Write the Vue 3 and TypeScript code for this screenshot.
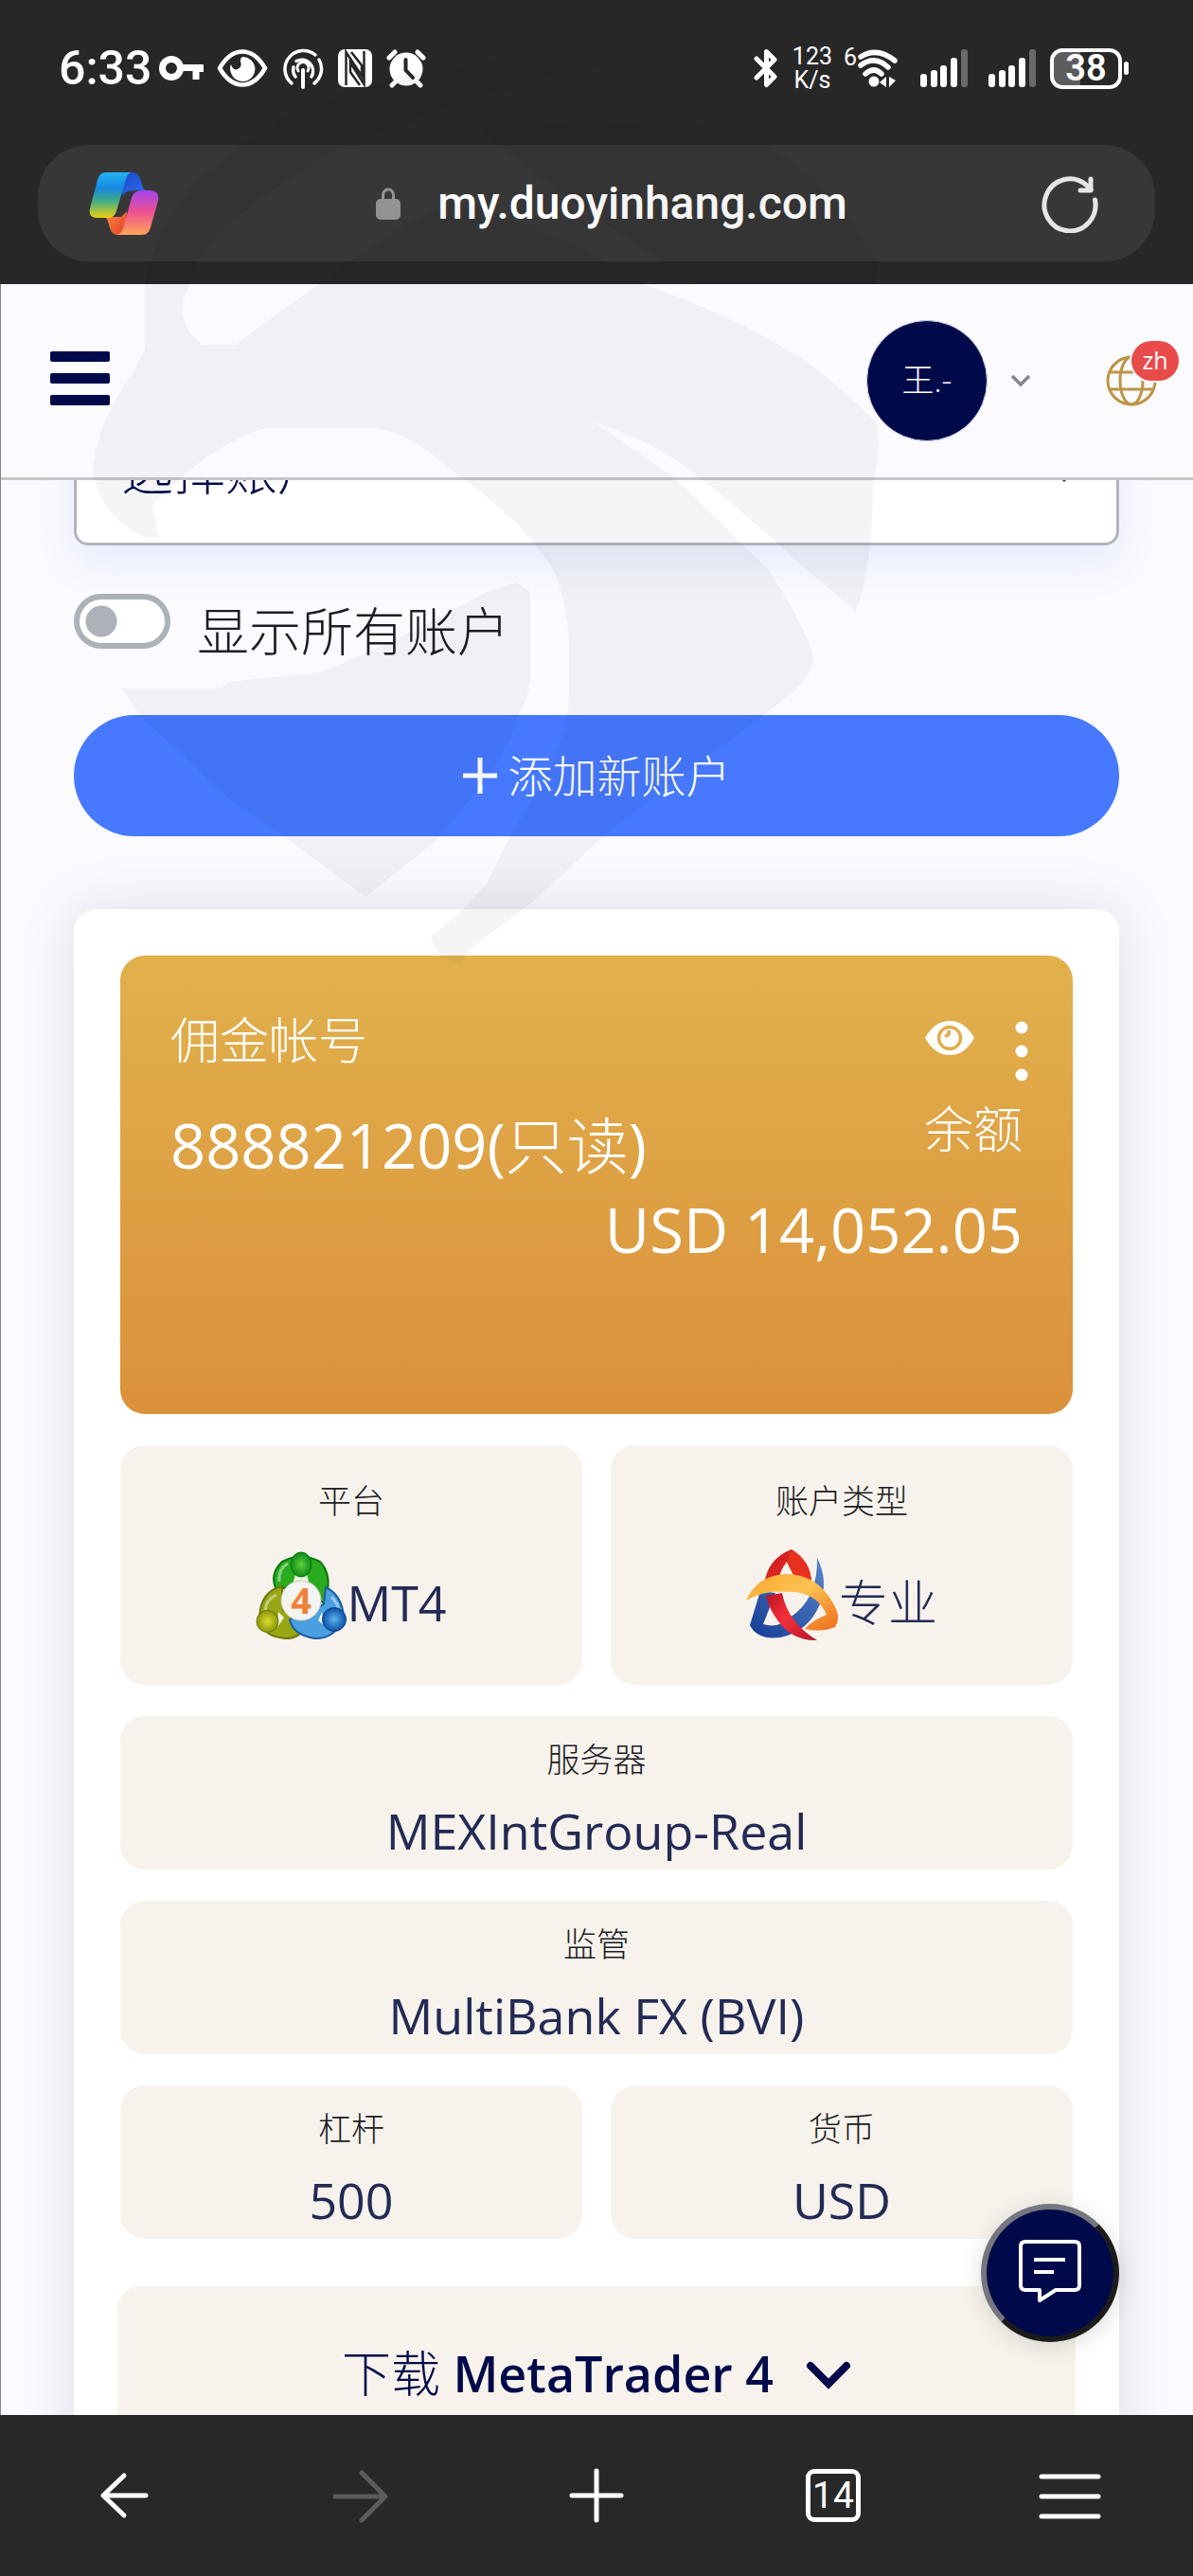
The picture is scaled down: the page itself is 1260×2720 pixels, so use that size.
<script setup lang="ts">
import { ref } from 'vue'

interface Fact {
  label: string
  value: string
  wide?: boolean
}

const facts: Fact[] = [
  { label: '服务器', value: 'MEXIntGroup-Real', wide: true },
  { label: '监管', value: 'MultiBank FX (BVI)', wide: true },
  { label: '杠杆', value: '500' },
  { label: '货币', value: 'USD' },
]

const signals = [0, 1]
const showAll = ref(false)
const account = ref('')
</script>

<template>
  <div class="screen">
    <header class="browser-top">
      <div class="status">
        <div class="status-left">
          <span class="clock">6:33</span>
          <svg class="i-key" width="48" height="28" viewBox="0 0 48 28" fill="none" stroke="#fff">
            <circle cx="13" cy="14" r="9.5" stroke-width="7" />
            <path d="M23 13.5H46M39 15V26" stroke-width="7" />
            <path d="M44.500 10V18" stroke-width="5" />
          </svg>
          <svg class="i-eye" width="54" height="44" viewBox="0 0 54 44">
            <path d="M3 22C10 10 18 4.500 27 4.500S44 10 51 22C44 34 36 39.500 27 39.500S10 34 3 22Z" fill="none" stroke="#fff" stroke-width="4.500" stroke-linejoin="round" />
            <path d="M27 10a13 13 0 1 1-12 17q-2-5 0-9q2 7 7 5q5-2 3-8q-1-3 2-5Z" fill="#fff" />
          </svg>
          <svg class="i-cast" width="44" height="44" viewBox="0 0 44 44" fill="none" stroke="#fff" stroke-width="3.500" stroke-linecap="round">
            <path d="M10 38A19.500 19.500 0 0 1 35 8M39 13A19.500 19.500 0 0 1 34 38" />
            <path d="M14 31A12 12 0 0 1 12 21M15 14.500A12 12 0 0 1 31 31" />
            <path d="M17 25A6 6 0 1 1 27 25" stroke-width="3" />
            <path d="M22 24V42" stroke-width="4" />
          </svg>
          <svg class="i-nfc" width="36" height="40" viewBox="0 0 36 40">
            <rect width="36" height="40" rx="7" fill="#fff" />
            <path d="M8.500 38V3L25 28V17L14 3M27.500 2V37L13 14V24L23 38" fill="none" stroke="#272727" stroke-width="2.500" />
          </svg>
          <svg class="i-alarm" width="42" height="42" viewBox="0 0 42 42" stroke="#fff" stroke-linecap="round">
            <path d="M3 10L9 4M39 10L33 4M11 34L6 39M31 34L36 39" stroke-width="5" />
            <circle cx="21" cy="22" r="17.500" fill="#fff" stroke="none" />
            <path d="M20.500 12V23L28 31" fill="none" stroke="#272727" stroke-width="4" />
          </svg>
        </div>
        <div class="status-right">
          <svg width="26" height="42" viewBox="0 0 26 42" fill="none" stroke="#fff" stroke-width="5" stroke-linejoin="round" stroke-linecap="round">
            <path d="M3 11L22 30L13.500 38.500V3.500L22 12L3 31" />
          </svg>
          <span class="rate"><span>123</span><span>K/s</span></span>
          <span class="wifi">
            <span class="wifi-gen">6</span>
            <svg width="46" height="42" viewBox="0 0 46 42" fill="none" stroke="#fff" stroke-width="5.500" stroke-linecap="round">
              <path d="M5 9Q22 -2 41 13M5 18Q20 7 34 20M10 27Q19 19 27 27" />
              <circle cx="19" cy="35" r="5.500" fill="#fff" stroke="none" />
              <path d="M32 30V41L25 36ZM35 41V30L42 34Z" fill="#fff" stroke="none" />
            </svg>
          </span>
          <svg v-for="s in signals" :key="s" class="signal" width="50" height="40" viewBox="0 0 50 40" fill="#fff">
            <rect x="0" y="26" width="7" height="14" rx="3" />
            <rect x="11" y="22" width="7" height="18" rx="3" />
            <rect x="21" y="17" width="7" height="23" rx="3" />
            <rect x="32" y="9" width="7" height="31" rx="3" />
            <rect x="43" y="0" width="7" height="40" rx="3" fill="#6a6a6a" />
          </svg>
          <span class="battery"><span class="battery-body">38</span><span class="battery-tip"></span></span>
        </div>
      </div>

      <div class="address">
        <svg class="copilot" width="74" height="68" viewBox="0 0 74 68">
          <defs>
            <linearGradient id="cpA" x1="0" y1="0" x2="0" y2="1">
              <stop offset="0" stop-color="#22b4f0" /><stop offset=".35" stop-color="#1787e2" />
              <stop offset=".65" stop-color="#46b07e" /><stop offset="1" stop-color="#efcf12" />
            </linearGradient>
            <linearGradient id="cpB" x1="0" y1="0" x2="0" y2="1">
              <stop offset="0" stop-color="#a345ee" /><stop offset=".5" stop-color="#ef528f" />
              <stop offset="1" stop-color="#ffa657" />
            </linearGradient>
            <linearGradient id="cpC" x1="0" y1="0" x2="1" y2="1">
              <stop offset="0" stop-color="#1b45c4" /><stop offset="1" stop-color="#2a6df0" />
            </linearGradient>
            <linearGradient id="cpD" x1="0" y1="0" x2="1" y2="1">
              <stop offset="0" stop-color="#ff8a3c" /><stop offset="1" stop-color="#e0402f" />
            </linearGradient>
          </defs>
          <path d="M28 1H46Q52 1 54 8L57 17Q58 20 61 20H50Q38 19 36 26Z" fill="url(#cpC)" />
          <path d="M16 48H34L40 42L38 62Q36 67 30 67Q24 67 22 60L20 53Q19 49 16 48Z" fill="url(#cpD)" />
          <path d="M18 1H46Q41 1 39 8L29 42Q27 49 20 49H8Q-1 49 1 39L9 9Q11 1 18 1Z" fill="url(#cpA)" />
          <path d="M56 20H64Q75 20 73 31L65 59Q63 67 56 67H28Q34 67 36 60L45 28Q47 20 56 20Z" fill="url(#cpB)" />
        </svg>
        <div class="url">
          <svg width="26" height="34" viewBox="0 0 26 34">
            <rect y="12" width="26" height="22" rx="5" fill="#939393" />
            <path d="M7.500 14V8A5.500 6 0 0 1 18.500 8V14" fill="none" stroke="#939393" stroke-width="3" />
          </svg>
          <span>my.duoyinhang.com</span>
        </div>
        <button class="plain" aria-label="刷新">
          <svg width="60" height="62" viewBox="0 0 60 62" fill="none" stroke="#e6e6e6" stroke-width="5" stroke-linecap="round" stroke-linejoin="round">
            <path d="M56.500 27A27 27.500 0 1 1 47 11L52 16" />
            <path d="M52 5V17H41" />
          </svg>
        </button>
      </div>
    </header>

    <main class="page">
      <nav class="site-nav">
        <button class="plain burger" aria-label="菜单"><i></i><i></i><i></i></button>
        <div class="nav-right">
          <span class="avatar">王.-</span>
          <button class="plain nav-chevron" aria-label="用户菜单">
            <svg width="22" height="14" viewBox="0 0 22 14" fill="none" stroke="#85858d" stroke-width="3.500"><path d="M2 2L11 11L20 2" /></svg>
          </button>
          <button class="plain language" aria-label="语言">
            <svg width="54" height="54" viewBox="0 0 54 54" fill="none" stroke="#bd9445" stroke-width="3">
              <circle cx="27" cy="27" r="25" />
              <ellipse cx="27" cy="27" rx="12" ry="25" />
              <path d="M4 18H50M4 36H50" />
            </svg>
            <span class="badge">zh</span>
          </button>
        </div>
      </nav>

      <div class="scroll">
        <div class="select-wrap">
          <select v-model="account" aria-label="选择账户">
            <option value="">选择账户</option>
          </select>
          <svg class="select-arrow" width="24" height="14" viewBox="0 0 24 14" fill="none" stroke="#44475c" stroke-width="3"><path d="M2 2L12 12L22 2" /></svg>
        </div>

        <label class="toggle-row">
          <input v-model="showAll" type="checkbox" class="toggle" />
          <span>显示所有账户</span>
        </label>

        <button class="add">
          <svg width="36" height="38" viewBox="0 0 36 38" stroke="#fff" stroke-width="5"><path d="M0 19H36M18 0V38" /></svg>
          <span>添加新账户</span>
        </button>

        <section class="card">
          <div class="gold">
            <div class="gold-top">
              <div>
                <div class="gold-label">佣金帐号</div>
                <div class="gold-number">888821209(<span class="thin">只读</span>)</div>
              </div>
              <div class="gold-side">
                <div class="gold-icons">
                  <button class="plain" aria-label="显示余额">
                    <svg width="54" height="36" viewBox="0 0 54 36">
                      <path d="M1 18C8 6 16 0 27 0S46 6 53 18C46 30 38 36 27 36S8 30 1 18Z" fill="#fff" />
                      <circle cx="27" cy="18" r="11.500" fill="none" stroke="#dfae4b" stroke-width="3.500" />
                      <path d="M22 15Q27 17 26 10" fill="none" stroke="#dfae4b" stroke-width="4" />
                    </svg>
                  </button>
                  <button class="plain" aria-label="更多">
                    <svg width="14" height="64" viewBox="0 0 14 64" fill="#fff">
                      <circle cx="7" cy="7" r="6.500" /><circle cx="7" cy="32" r="6.500" /><circle cx="7" cy="57" r="6.500" />
                    </svg>
                  </button>
                </div>
                <div class="gold-label">余额</div>
              </div>
            </div>
            <div class="gold-amount">USD 14,052.05</div>
          </div>

          <div class="tiles">
            <div class="tile tall">
              <div class="tile-label">平台</div>
              <div class="tile-brand">
                <svg width="96" height="97" viewBox="0 0 96 97">
                  <defs>
                    <radialGradient id="mG"><stop offset="0" stop-color="#5fd03f" /><stop offset="1" stop-color="#0d8a15" /></radialGradient>
                    <radialGradient id="mY"><stop offset="0" stop-color="#d9de2a" /><stop offset="1" stop-color="#8c960c" /></radialGradient>
                    <radialGradient id="mB"><stop offset="0" stop-color="#5fb4ee" /><stop offset="1" stop-color="#0a4fa8" /></radialGradient>
                  </defs>
                  <path d="M28 13Q48 2 68 13Q79 25 76 43L73 58L48 36L22 43Q14 26 28 13Z" fill="#2bab1f" stroke="#08770f" stroke-width="2" />
                  <path d="M28 39Q5 44 4 72Q6 92 31 94Q49 94 51 80L29 64Z" fill="#98a614" stroke="#6d7808" stroke-width="2" />
                  <path d="M74 40Q91 48 93 71L91 78Q80 95 62 94Q39 90 36 74L72 58Z" fill="#4a9fe0" stroke="#1c5ea5" stroke-width="2" />
                  <path d="M25 34Q24 20 34 15M10 64Q11 53 22 48M80 50Q88 58 88 67" fill="none" stroke="#fff" stroke-opacity=".45" stroke-width="3" />
                  <path d="M24 66L30 72L23 82Z M70 66L66 75L72 80Z" fill="#f2f4ea" />
                  <path d="M42 26H54L56 34H40Z" fill="#e9f7df" />
                  <ellipse cx="48" cy="16" rx="11" ry="13" fill="url(#mG)" stroke="#08770f" />
                  <circle cx="12.500" cy="76" r="11.500" fill="url(#mY)" stroke="#6d7808" />
                  <circle cx="83" cy="74" r="12.500" fill="url(#mB)" stroke="#0b428c" />
                  <circle cx="48" cy="54" r="21" fill="#f4f4f1" stroke="#c9cbb9" />
                  <text x="48" y="68" text-anchor="middle" class="mt-digit">4</text>
                </svg>
                <span>MT4</span>
              </div>
            </div>
            <div class="tile tall">
              <div class="tile-label">账户类型</div>
              <div class="tile-brand">
                <svg width="98" height="97" viewBox="0 0 98 97">
                  <defs>
                    <linearGradient id="pR" x1="0" y1="0" x2="1" y2="1"><stop offset="0" stop-color="#c8171b" /><stop offset="1" stop-color="#f0392b" /></linearGradient>
                    <linearGradient id="pO" x1="0" y1="0" x2="1" y2="1"><stop offset="0" stop-color="#f9a52b" /><stop offset=".45" stop-color="#fcc453" /><stop offset="1" stop-color="#ee6a1a" /></linearGradient>
                    <linearGradient id="pB" x1="0" y1="1" x2="1" y2="0"><stop offset="0" stop-color="#143c94" /><stop offset="1" stop-color="#5a86cb" /></linearGradient>
                    <linearGradient id="pS" x1="0" y1="0" x2="1" y2="1"><stop offset="0" stop-color="#b71324" /><stop offset=".45" stop-color="#f5303a" /><stop offset="1" stop-color="#b51426" /></linearGradient>
                  </defs>
                  <path d="M75 9Q88 34 77 60Q65 87 36 93Q12 96 4 80L15 44L31 46L18 79Q34 84 46 72Q76 53 75 9Z" fill="url(#pB)" />
                  <path d="M19 38Q22 10 48 0Q69 13 69 36L54 35L43 13Q34 24 34 39Z" fill="url(#pR)" />
                  <path d="M48 0Q69 13 69 36L54 35L43 13Z" fill="#e7311f" />
                  <path d="M0 54Q12 27 42 26Q75 26 92 57Q101 72 94 82Q80 88 62 84Q68 76 85 69Q75 46 48 45Q19 42 0 54Z" fill="url(#pO)" />
                  <path d="M21 49L38 46Q44 77 75 96Q46 97 30 70Q23 59 21 49Z" fill="url(#pS)" />
                </svg>
                <span class="thin">专业</span>
              </div>
            </div>
            <div v-for="f in facts" :key="f.label" class="tile" :class="{ wide: f.wide }">
              <div class="tile-label">{{ f.label }}</div>
              <div class="tile-value">{{ f.value }}</div>
            </div>
          </div>

          <button class="download">
            <span><span class="thin">下载</span> MetaTrader 4</span>
            <svg width="48" height="30" viewBox="0 0 48 30" fill="none" stroke="#000a4a" stroke-width="8" stroke-linecap="round"><path d="M5 5L24 24L43 5" /></svg>
          </button>
        </section>
      </div>

      <button class="chat" aria-label="聊天">
        <svg width="66" height="66" viewBox="0 0 66 66" fill="none" stroke="#fff" stroke-width="4" stroke-linejoin="round">
          <path d="M7 2H59Q64 2 64 7V48Q64 53 59 53H39L22 64V53H7Q2 53 2 48V7Q2 2 7 2Z" />
          <path d="M16 21H49M16 34H37" />
        </svg>
      </button>
    </main>

    <footer class="browser-bottom">
      <button class="plain" aria-label="后退">
        <svg width="60" height="60" viewBox="0 0 60 60" fill="none" stroke="#fff" stroke-width="5" stroke-linecap="round" stroke-linejoin="round"><path d="M31 9L9 30L31 51M9 30H54" /></svg>
      </button>
      <button class="plain" aria-label="前进">
        <svg width="60" height="60" viewBox="0 0 60 60" fill="none" stroke="#5c5c5c" stroke-width="5" stroke-linecap="round" stroke-linejoin="round"><path d="M32 6L57 31L32 56M57 31H4" /></svg>
      </button>
      <button class="plain" aria-label="新标签页">
        <svg width="60" height="60" viewBox="0 0 60 60" stroke="#fff" stroke-width="5" stroke-linecap="round"><path d="M4 30H56M30 4V56" /></svg>
      </button>
      <button class="plain tabs" aria-label="标签页">14</button>
      <button class="plain" aria-label="更多选项">
        <svg width="66" height="60" viewBox="0 0 66 60" stroke="#fff" stroke-width="5" stroke-linecap="round"><path d="M3 10H63M3 31H63M3 52H63" /></svg>
      </button>
    </footer>

    <svg class="emblem" width="960" height="1030" viewBox="0 0 960 1030" aria-hidden="true">
      <path d="M153 300Q160 250 200 200Q290 105 460 72Q560 60 660 62Q500 100 400 142Q300 180 230 250Q200 280 201 300L193 320Q190 345 213 364H249Q280 340 337 300Q430 230 480 215Q580 235 679 300Q780 335 852 382Q890 410 925 446Q932 470 922 510Q922 600 904 645Q880 625 844 595Q790 545 739 504Q690 465 627 446Q680 480 723 514Q780 570 812 602Q850 660 860 696Q858 712 836 732L804 757L643 878L563 952L498 1001L486 1018L466 1011L454 990L482 967L514 933L534 892L563 843Q600 780 601 735V676Q595 610 575 588Q545 545 474 494Q430 455 394 452H281Q220 470 161 534L167 567H153Q110 550 98 500Q100 450 137 399L153 368Z" />
      <path d="M129 727H233L241 720L338 710L402 683L450 659L514 625L546 615L560 625V717Q558 740 546 757Q540 790 498 843L458 890L386 947L309 890L241 843L193 797L149 757Z" />
      <path d="M500 132Q700 120 791 143Q880 190 927 277L925 300H740Q620 230 500 132Z" />
    </svg>
  </div>
</template>

<style>
body {
  margin: 0;
  background: #272727;
}
</style>

<style scoped>
* {
  box-sizing: border-box;
}

svg {
  display: block;
  flex: none;
}

.screen {
  position: relative;
  display: flex;
  flex-direction: column;
  height: 100vh;
  overflow: hidden;
  font-family: "Open Sans", "Noto Sans CJK SC", sans-serif;
  color: #fff;
}

button,
select {
  font-family: inherit;
  color: inherit;
}

.plain {
  display: flex;
  align-items: center;
  justify-content: center;
  padding: 0;
  border: 0;
  background: none;
}

.browser-top {
  height: 300px;
  flex: none;
  padding: 36px 40px 0;
  background: #272727;
}

.status {
  display: flex;
  justify-content: space-between;
  align-items: center;
  height: 72px;
  margin-bottom: 45px;
  padding: 0 28px 0 22px;
  font-family: Roboto, sans-serif;
}

.status-left,
.status-right {
  display: flex;
  align-items: center;
}

.clock {
  width: 96px;
  margin-right: 10px;
  font-size: 50px;
  line-height: 72px;
  font-weight: 500;
}

.i-eye {
  margin-left: 13px;
}

.i-cast,
.i-nfc,
.i-alarm {
  margin-left: 15px;
}

.rate {
  display: flex;
  flex-direction: column;
  align-items: center;
  margin-left: 15px;
  font-size: 25px;
  line-height: 25px;
}

.wifi {
  display: flex;
  margin-left: 12px;
}

.wifi-gen {
  width: 13px;
  font-size: 25px;
  line-height: 20px;
}

.signal {
  margin-left: 22px;
}

.battery {
  display: flex;
  align-items: center;
  gap: 2px;
  margin-left: 15px;
}

.battery-body {
  width: 76px;
  height: 43px;
  border: 4px solid #fff;
  border-radius: 13px;
  background: linear-gradient(90deg, #5d5d5d 28px, transparent 28px);
  font-size: 38px;
  line-height: 35px;
  font-weight: 600;
  text-align: center;
}

.battery-tip {
  width: 5px;
  height: 14px;
  border-radius: 3px;
  background: #fff;
}

.address {
  display: flex;
  align-items: center;
  justify-content: space-between;
  height: 123px;
  padding: 0 60px 0 54px;
  border-radius: 54px;
  background: #373737;
}

.url {
  display: flex;
  align-items: center;
  gap: 39px;
  margin-left: 24px;
  font-family: Roboto, sans-serif;
  font-size: 48px;
  line-height: 64px;
  font-weight: 500;
}

.page {
  position: relative;
  display: flex;
  flex: 1;
  flex-direction: column;
  min-height: 0;
  overflow: hidden;
  border-left: 1px solid #85858a;
  background: #fafaff;
}

.site-nav {
  position: relative;
  z-index: 1;
  display: flex;
  flex: none;
  align-items: center;
  justify-content: space-between;
  height: 207px;
  padding: 0 38px 0 52px;
  border-bottom: 3px solid #c6c6ca;
  background: #fafaff;
}

.burger {
  flex-direction: column;
  gap: 12px;
  margin-bottom: 5px;
}

.burger i {
  width: 63px;
  height: 11px;
  border-radius: 2px;
  background: #000a4a;
}

.nav-right {
  display: flex;
  align-items: center;
}

.avatar {
  width: 128px;
  height: 128px;
  border: 1px solid #c9cdea;
  border-radius: 50%;
  background: #000a4a;
  font-size: 34px;
  line-height: 124px;
  font-weight: 300;
  text-align: center;
}

.nav-chevron {
  margin: 0 79px 0 24px;
}

.language {
  position: relative;
}

.badge {
  position: absolute;
  top: -15px;
  right: -23px;
  width: 50px;
  height: 42px;
  border-radius: 21px;
  background: #e94b4b;
  font-size: 25px;
  line-height: 40px;
  box-shadow: 0 0 0 2px #fafaff;
}

.scroll {
  flex: none;
  padding: 0 78px 0 77px;
}

.select-wrap {
  position: relative;
  height: 162px;
  margin-top: -93px;
}

.select-wrap select {
  width: 100%;
  height: 100%;
  padding: 0 47px;
  border: 3px solid #b4b4be;
  border-radius: 15px;
  appearance: none;
  background: #fff;
  box-shadow: 0 20px 40px rgba(70, 120, 220, .1);
  color: #000a4a;
  font-size: 55px;
  font-weight: 300;
}

.select-arrow {
  position: absolute;
  top: 50%;
  right: 46px;
}

.toggle-row {
  display: flex;
  align-items: flex-start;
  gap: 28px;
  margin-top: 51px;
  color: #1c1c24;
  font-size: 55px;
  line-height: 78px;
  font-weight: 300;
}

.toggle {
  width: 102px;
  height: 58px;
  margin: 0;
  border: 6px solid #adb2b9;
  border-radius: 29px;
  appearance: none;
  background: radial-gradient(circle at 23px 50%, #adb2b9 16px, #fff 17px);
}

.toggle:checked {
  background: radial-gradient(circle at 67px 50%, #4678ff 16px, #fff 17px);
}

.add {
  display: flex;
  align-items: center;
  justify-content: center;
  gap: 12px;
  width: 100%;
  height: 128px;
  margin-top: 50px;
  padding: 0;
  border: 0;
  border-radius: 64px;
  background: #4679ff;
  font-size: 47px;
  line-height: 64px;
  font-weight: 300;
}

.card {
  margin-top: 77px;
  padding: 49px;
  border-radius: 24px;
  background: #fff;
  box-shadow: 0 0 60px rgba(20, 20, 50, .13);
}

.gold {
  min-height: 484px;
  padding: 54px 53px;
  border-radius: 26px;
  background: linear-gradient(#e1b14c, #db903b);
}

.gold-top {
  display: flex;
  justify-content: space-between;
}

.gold-label {
  font-size: 52px;
  line-height: 70px;
  font-weight: 300;
}

.gold-number {
  margin-top: 33px;
}

.gold-number,
.gold-amount {
  font-size: 65px;
  line-height: 86px;
}

.gold-side,
.gold-amount {
  text-align: right;
}

.gold-amount {
  margin-top: 3px;
}

.gold-icons {
  display: flex;
  align-items: flex-start;
  justify-content: flex-end;
  gap: 42px;
  margin-right: -6px;
  padding: 15px 0;
}

.tiles {
  display: grid;
  grid-template-columns: 1fr 1fr;
  gap: 33px 30px;
  margin-top: 33px;
}

.tile {
  padding: 21px 20px 3px;
  border-radius: 26px;
  background: #f7f3ec;
  text-align: center;
}

.wide {
  grid-column: span 2;
}

.tall {
  padding: 34px 20px 46px;
}

.tile-label {
  color: #1c1c24;
  font-size: 35px;
  line-height: 50px;
  font-weight: 300;
}

.tile-value {
  margin-top: 12px;
  color: #232a55;
  font-size: 52px;
  line-height: 76px;
  font-weight: 500;
}

.tile-brand {
  display: flex;
  align-items: flex-end;
  justify-content: center;
  margin-top: 26px;
  color: #232a55;
  font-size: 52px;
  line-height: 82px;
  font-weight: 500;
}

.mt-digit {
  fill: #ee8238;
  font-size: 38px;
  font-weight: 700;
}

.download {
  display: flex;
  align-items: flex-start;
  justify-content: center;
  gap: 34px;
  width: calc(100% + 6px);
  margin: 50px -3px 0;
  padding: 54px 20px;
  border: 0;
  border-radius: 24px;
  background: #f7f3ec;
  color: #000a4a;
  font-size: 52px;
  line-height: 76px;
  font-weight: 600;
}

.download svg {
  margin-top: 25px;
}

.thin {
  font-weight: 300;
}

.chat {
  position: absolute;
  z-index: 2;
  right: 78px;
  bottom: 77px;
  display: flex;
  align-items: center;
  justify-content: center;
  width: 146px;
  height: 146px;
  padding: 0 0 4px;
  border: 6px solid;
  border-color: #767680 #1c1c1c #1c1c1c #767680;
  border-radius: 50%;
  background: #000a4a;
  box-shadow: 0 4px 24px rgba(0, 0, 0, .14);
}

.browser-bottom {
  display: flex;
  flex: none;
  align-items: flex-start;
  height: 170px;
  padding: 55px 5px 0;
  background: #282828;
}

.browser-bottom .plain {
  flex: 1;
  height: 60px;
}

.browser-bottom .tabs {
  position: relative;
  color: #fff;
  font-family: Roboto, sans-serif;
  font-size: 39px;
  line-height: 60px;
}

.tabs::before {
  content: "";
  position: absolute;
  inset: 2px calc(50% - 29px);
  border: 5px solid #fff;
  border-radius: 9px;
}

.emblem {
  position: absolute;
  z-index: 3;
  top: 0;
  left: 0;
  fill: rgba(0, 0, 0, .04);
  pointer-events: none;
}
</style>
